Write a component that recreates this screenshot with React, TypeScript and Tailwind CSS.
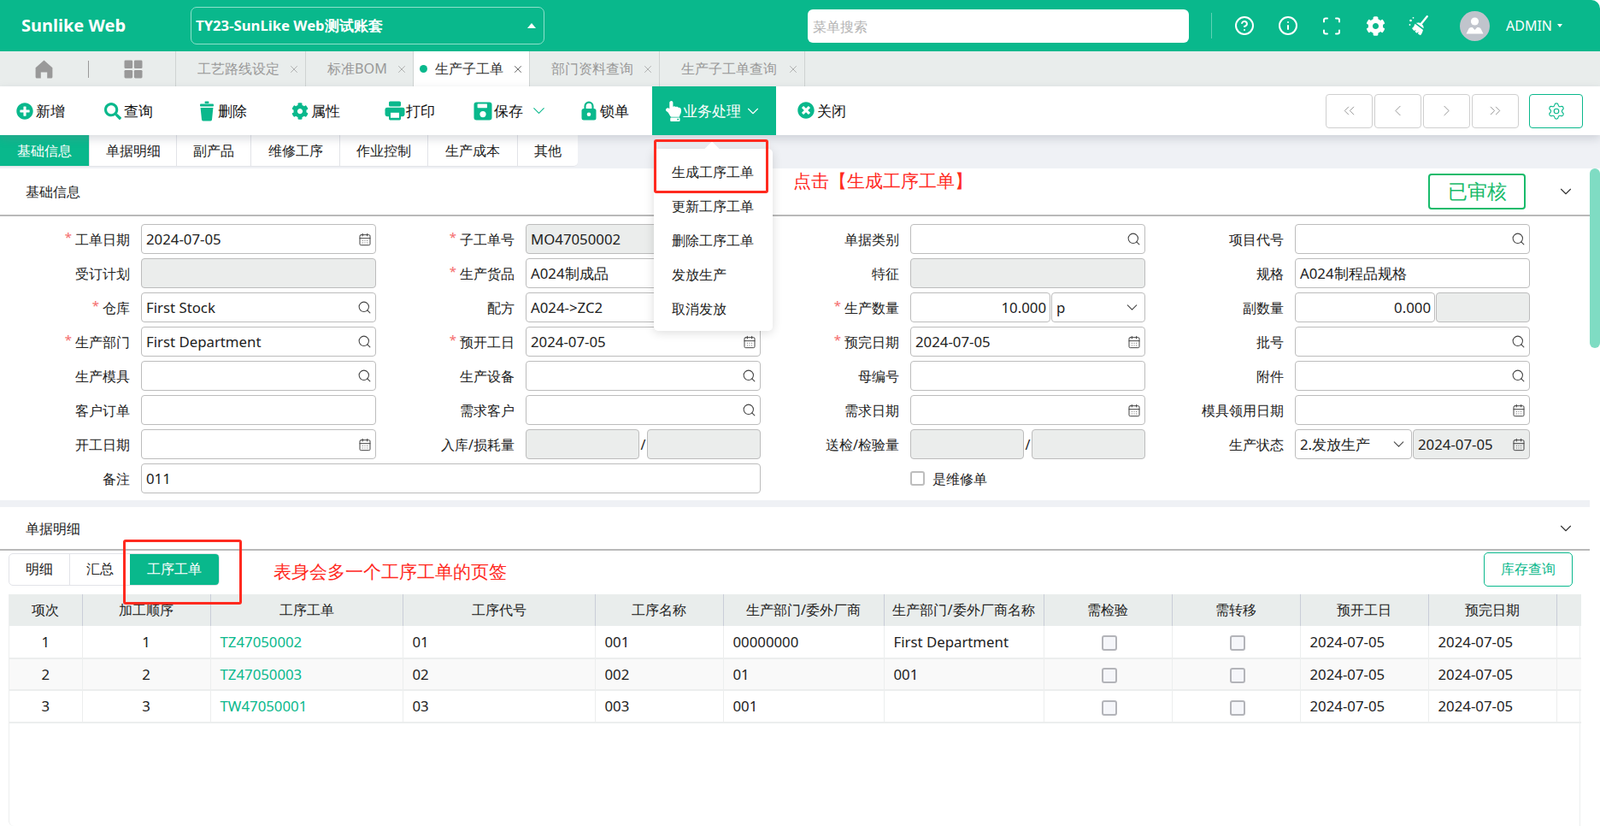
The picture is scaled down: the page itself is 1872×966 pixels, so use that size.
import React from "react";
import { FaPlusCircle, FaSearch, FaCog, FaHandPointUp, FaTimesCircle } from "react-icons/fa";
import {
  CircleHelp,
  Info,
  Scan,
  Search,
  CalendarDays,
  ChevronDown,
  ChevronsLeft,
  ChevronLeft,
  ChevronRight,
  ChevronsRight,
  Settings,
  X,
} from "lucide-react";

const GREEN = "text-[#09b88c]";

function TrashIcon() {
  return (
    <svg width="18" height="24" viewBox="0 0 18 24" fill="#09b88c">
      <rect x="6.5" y="0.5" width="5" height="2.4" rx="1" />
      <rect x="1" y="3.6" width="16" height="3" rx="1" />
      <path d="M1.6 8h14.8l-1.4 14a2 2 0 0 1-2 1.6H5a2 2 0 0 1-2-1.6z" />
    </svg>
  );
}

function PrintIcon() {
  return (
    <svg width="24" height="23" viewBox="0 0 24 23" fill="#09b88c">
      <rect x="5" y="0.5" width="14" height="6" rx="1.6" />
      <rect x="0.5" y="7.8" width="23" height="10.4" rx="2.4" />
      <rect x="5" y="12" width="14" height="10.5" rx="1.4" />
      <rect x="7" y="13.8" width="10" height="6" fill="#fff" />
    </svg>
  );
}

function SaveIcon() {
  return (
    <svg width="22" height="22" viewBox="0 0 22 22" fill="#09b88c">
      <rect x="0.5" y="0.5" width="21" height="21" rx="3" />
      <rect x="4.6" y="2.6" width="11.4" height="4.6" rx="0.6" fill="#fff" />
      <circle cx="11" cy="14.6" r="3.6" fill="#fff" />
    </svg>
  );
}

function LockIcon() {
  return (
    <svg width="18" height="23" viewBox="0 0 18 23">
      <path d="M4.5 10V6.2a4.5 4.5 0 0 1 9 0V10" fill="none" stroke="#09b88c" strokeWidth="2.2" />
      <rect x="0.5" y="9" width="17" height="13.5" rx="2.5" fill="#09b88c" />
      <circle cx="9" cy="15.7" r="2.3" fill="#fff" />
    </svg>
  );
}

function HomeIcon() {
  return (
    <svg width="21" height="22" viewBox="0 0 21 22" fill="#999">
      <path d="M10.5 0.5 20.4 9.3V20a1.6 1.6 0 0 1-1.6 1.6h-4.6v-7.2H6.8v7.2H2.2A1.6 1.6 0 0 1 .6 20V9.3z" />
    </svg>
  );
}

function GridIcon() {
  return (
    <svg width="22" height="22" viewBox="0 0 22 22" fill="#999">
      <rect x="0.5" y="0.5" width="9.6" height="9.6" rx="1.4" />
      <rect x="11.9" y="0.5" width="9.6" height="9.6" rx="1.4" />
      <rect x="0.5" y="11.9" width="9.6" height="9.6" rx="1.4" />
      <rect x="11.9" y="11.9" width="9.6" height="9.6" rx="1.4" />
    </svg>
  );
}

function AvatarIcon() {
  return (
    <svg width="35" height="35" viewBox="0 0 35 35">
      <circle cx="17.5" cy="17.5" r="17.5" fill="#c0c4cc" />
      <circle cx="17.5" cy="12" r="4.6" fill="#fff" />
      <path d="M7.5 26.5 10.5 20.5a3 3 0 0 1 2.6-1.6h1.6L17.5 22l2.8-3.1h1.6a3 3 0 0 1 2.6 1.6l3 6z" fill="#fff" />
    </svg>
  );
}

function BroomIcon() {
  return (
    <svg width="24" height="24" viewBox="0 0 24 24" fill="#fff">
      <path d="M23 1.5 15 11.5l-2-1.6L21 .3a1.3 1.3 0 0 1 2 1.2z" />
      <path d="M10.2 8.8c2-.6 3.6 0 5.3 1.4 1.7 1.4 2.4 3 2 5L8.7 8.8z" />
      <path d="M7.5 9.8 17 17c-.6 2.5-1.6 4.6-3 6.2-1-.3-2-.9-3-1.6l.7-2.4-2.3 1.5c-.7-.5-1.3-1-1.9-1.6l1.3-2-2.4 1C5.4 16.9 4.7 16.1 4 15c1.5-.4 2.7-2.6 3.500-5.200z" />
      <circle cx="2.5" cy="6" r="1.3" />
      <circle cx="5.5" cy="2.8" r="0.9" />
      <circle cx="1.5" cy="11" r="0.9" />
    </svg>
  );
}

function ToolItem({ icon, label, w, chevron }: { icon: React.ReactNode; label: string; w: string; chevron?: boolean }) {
  return (
    <div className={`flex items-center h-full ${w}`}>
      <span className="w-[26px] flex items-center justify-center">{icon}</span>
      <span className="text-[17.2px] text-[#111]">{label}</span>
      {chevron && <ChevronDown size={23} strokeWidth={1.1} className="ml-[7px] text-[#09b88c]" />}
    </div>
  );
}

function PageTab({ label, w, active, pl }: { label: string; w: string; active?: boolean; pl: string }) {
  return (
    <div
      className={`${w} ${pl} h-full flex items-center border-r border-[#cfd3d2] text-[16.2px] ${
        active ? "bg-white text-[#333]" : "text-[#999]"
      }`}
    >
      {active && <span className="w-[9px] h-[9px] rounded-full bg-[#09b88c] mr-[9px] shrink-0" />}
      <span className="whitespace-nowrap">{label}</span>
      <X size={14} strokeWidth={1.25} className={`ml-auto mr-[6px] ${active ? "text-[#333]" : "text-[#999]"}`} />
    </div>
  );
}

function SubTab({ label, w, active }: { label: string; w: string; active?: boolean }) {
  return (
    <div
      className={`${w} h-full flex items-center justify-center text-[16.2px] border-r border-[#e2e3e8] last:border-r-0 ${
        active ? "bg-[#09b88c] text-white" : "text-[#222]"
      }`}
    >
      {label}
    </div>
  );
}

function Box({
  text,
  disabled,
  icon,
  right,
  className = "flex-1",
}: {
  text?: string;
  disabled?: boolean;
  icon?: "search" | "date" | "down";
  right?: boolean;
  className?: string;
}) {
  return (
    <div
      className={`${className} h-[35px] min-w-0 rounded-[4px] border border-[#bcbcbc] pl-[5px] pr-[4px] flex items-center text-[16.8px] text-[#222] whitespace-nowrap ${
        disabled ? "bg-[#ebedec]" : "bg-white"
      }`}
    >
      <span className={right ? "ml-auto" : ""}>{text}</span>
      {icon === "search" && <Search size={17} strokeWidth={1.5} className="ml-auto text-[#444]" />}
      {icon === "date" && <CalendarDays size={16} strokeWidth={1.5} className="ml-auto text-[#444]" />}
      {icon === "down" && <ChevronDown size={21} strokeWidth={1.2} className="ml-auto text-[#444]" />}
    </div>
  );
}

function Field({ label, req, children }: { label: string; req?: boolean; children: React.ReactNode }) {
  return (
    <div className="flex items-center h-[35px]">
      <div className="w-[152px] flex justify-end items-center text-[16px] text-[#222] whitespace-nowrap">
        {req && <span className="text-[#f56c6c] text-[15px] mr-[4px] leading-none mb-[5px]">*</span>}
        {label}
      </div>
      <div className="ml-[13px] w-[275px] flex items-center">{children}</div>
    </div>
  );
}

function SectionHead({ title, className, children }: { title: string; className: string; children?: React.ReactNode }) {
  return (
    <div className={`${className} flex items-center pl-[30px] pr-[17px] text-[16px] text-[#222] border-b-2 border-[#b9b9b9]`}>
      <span>{title}</span>
      <div className="ml-auto flex items-center">
        {children}
        <ChevronDown size={22} strokeWidth={1.2} className="ml-[36px] text-[#333]" />
      </div>
    </div>
  );
}

const headers = [
  "项次",
  "加工顺序",
  "工序工单",
  "工序代号",
  "工序名称",
  "生产部门/委外厂商",
  "生产部门/委外厂商名称",
  "需检验",
  "需转移",
  "预开工日",
  "预完日期",
  "",
];
const colW = ["w-[85px]", "w-[150px]", "w-[225px]", "w-[225px]", "w-[150px]", "w-[188px]", "w-[187px]", "w-[150px]", "w-[150px]", "w-[150px]", "w-[150px]", "w-[29px]"];

const rows = [
  ["1", "1", "TZ47050002", "01", "001", "00000000", "First Department"],
  ["2", "2", "TZ47050003", "02", "002", "01", "001"],
  ["3", "3", "TW47050001", "03", "003", "001", ""],
];

function Check() {
  return <span className="inline-block ml-[4px] align-middle w-[18px] h-[18px] rounded-[3px] border-2 border-[#b3b4b9] bg-[#f5f6fa]" />;
}

export default function App() {
  return (
    <div className="relative w-[1872px] h-[966px] overflow-hidden bg-white font-['Noto_Sans_CJK_SC','Noto_Sans',sans-serif]">
      {/* Top header */}
      <header className="h-[60px] bg-[#09b88c] rounded-tr-[10px] flex items-center text-white">
        <div className="w-[223px] pl-[25px] text-[20px] font-bold font-['Roboto','Noto_Sans_CJK_SC',sans-serif]">Sunlike Web</div>
        <div className="w-[414px] h-[44px] rounded-[7px] border border-[#8fe0cb] flex items-center pl-[5px] pr-[9px]">
          <span className="text-[16.7px] font-bold">TY23-SunLike Web测试账套</span>
          <span className="ml-auto w-0 h-0 border-x-[5px] border-x-transparent border-b-[6px] border-b-white" />
        </div>
        <div className="ml-[308px] w-[446px] h-[39px] rounded-[6px] bg-white flex items-center pl-[6px] pt-[2px] text-[16px] text-[#b4b4b4]">
          菜单搜索
        </div>
        <div className="ml-[26px] w-px h-[30px] bg-[#5fd2b5]" />
        <div className="ml-[26px] w-[24px] flex justify-center"><CircleHelp size={24} strokeWidth={2} /></div>
        <div className="ml-[27px] w-[24px] flex justify-center"><Info size={24} strokeWidth={2} /></div>
        <div className="ml-[27px] w-[24px] flex justify-center"><Scan size={27} strokeWidth={2} /></div>
        <div className="ml-[27px] w-[24px] flex justify-center"><FaCog size={23} /></div>
        <div className="ml-[27px] w-[24px] flex justify-center"><BroomIcon /></div>
        <div className="ml-[36px]"><AvatarIcon /></div>
        <span className="ml-[19px] text-[16px]">ADMIN</span>
        <span className="ml-[6px] w-0 h-0 border-x-[3.5px] border-x-transparent border-t-[4px] border-t-white" />
      </header>

      {/* Page tabs */}
      <nav className="h-[41px] bg-[#e9edec] flex items-center">
        <div className="w-[206px] h-full flex items-center border-r border-[#cfd3d2]">
          <div className="ml-[41px]"><HomeIcon /></div>
          <div className="ml-[41px] w-px h-[20px] bg-[#999]" />
          <div className="ml-[41px]"><GridIcon /></div>
        </div>
        <PageTab label="工艺路线设定" w="w-[152px]" pl="pl-[25px]" />
        <PageTab label="标准BOM" w="w-[126px]" pl="pl-[25px]" />
        <PageTab label="生产子工单" w="w-[136px]" pl="pl-[7px]" active />
        <PageTab label="部门资料查询" w="w-[152px]" pl="pl-[25px]" />
        <PageTab label="生产子工单查询" w="w-[170px]" pl="pl-[25px]" />
      </nav>

      {/* Toolbar */}
      <div className="relative z-10 h-[57px] bg-white flex items-center pl-[16px] shadow-[0_4px_10px_rgba(120,125,140,0.28)]">
        <ToolItem w="w-[103px]" label="新增" icon={<FaPlusCircle size={20} className={GREEN} />} />
        <ToolItem w="w-[110px]" label="查询" icon={<FaSearch size={20} className={GREEN} />} />
        <ToolItem w="w-[109px]" label="删除" icon={<TrashIcon />} />
        <ToolItem w="w-[111px]" label="属性" icon={<FaCog size={20} className={GREEN} />} />
        <ToolItem w="w-[103px]" label="打印" icon={<PrintIcon />} />
        <ToolItem w="w-[124px]" label="保存" chevron icon={<SaveIcon />} />
        <ToolItem w="w-[87px]" label="锁单" icon={<LockIcon />} />
        <div className="w-[145px] h-full bg-[#09b88c] text-white flex items-center pl-[13px]">
          <FaHandPointUp size={24} />
          <span className="ml-[-1px] text-[17.2px]">业务处理</span>
          <ChevronDown size={22} strokeWidth={1.2} className="ml-[3px]" />
        </div>
        <div className="ml-[22px]">
          <ToolItem w="w-[80px]" label="关闭" icon={<FaTimesCircle size={20} className={GREEN} />} />
        </div>
        <div className="ml-auto mr-[20px] flex items-center">
          {[ChevronsLeft, ChevronLeft, ChevronRight, ChevronsRight].map((I, i) => (
            <div key={i} className="w-[55px] h-[40px] mr-[2px] rounded-[4px] border border-[#cfcfcf] flex items-center justify-center text-[#888]">
              <I size={21} strokeWidth={1} />
            </div>
          ))}
          <div className="ml-[10px] w-[63px] h-[40px] rounded-[4px] border border-[#09b88c] flex items-center justify-center text-[#09b88c]">
            <Settings size={22} strokeWidth={1.25} />
          </div>
        </div>
      </div>

      {/* Sub tabs */}
      <div className="h-[39px] bg-[#eff1f5]">
        <div className="w-[676px] h-[37px] flex bg-white rounded-br-[5px] overflow-hidden border-b border-[#e2e3e8]">
          <SubTab label="基础信息" w="w-[105px]" active />
          <SubTab label="单据明细" w="w-[102px]" />
          <SubTab label="副产品" w="w-[87px]" />
          <SubTab label="维修工序" w="w-[104px]" />
          <SubTab label="作业控制" w="w-[103px]" />
          <SubTab label="生产成本" w="w-[105px]" />
          <SubTab label="其他" w="w-[70px]" />
        </div>
      </div>

      {/* Scrollable body */}
      <div className="flex h-[769px]">
        <div className="w-[1860px] bg-[#eff1f5] flex flex-col gap-[8px]">
          {/* Basic info */}
          <section className="h-[388px] bg-white">
            <SectionHead title="基础信息" className="h-[56px]">
              <div className="w-[114px] h-[42px] rounded-[4px] border-2 border-[#18bb6b] flex items-center justify-center text-[22.5px] text-[#18bb6b]">
                已审核
              </div>
            </SectionHead>
            <div className="pt-[9px] grid grid-cols-[repeat(4,450px)] gap-y-[5px]">
              <Field label="工单日期" req><Box text="2024-07-05" icon="date" /></Field>
              <Field label="子工单号" req><Box text="MO47050002" disabled /></Field>
              <Field label="单据类别"><Box icon="search" /></Field>
              <Field label="项目代号"><Box icon="search" /></Field>

              <Field label="受订计划"><Box disabled /></Field>
              <Field label="生产货品" req><Box text="A024制成品" /></Field>
              <Field label="特征"><Box disabled /></Field>
              <Field label="规格"><Box text="A024制程品规格" /></Field>

              <Field label="仓库" req><Box text="First Stock" icon="search" /></Field>
              <Field label="配方"><Box text="A024->ZC2" /></Field>
              <Field label="生产数量" req>
                <Box text="10.000" right className="w-[164px]" />
                <Box text="p" icon="down" className="ml-px w-[110px]" />
              </Field>
              <Field label="副数量">
                <Box text="0.000" right className="w-[164px]" />
                <Box disabled className="ml-px w-[110px]" />
              </Field>

              <Field label="生产部门" req><Box text="First Department" icon="search" /></Field>
              <Field label="预开工日" req><Box text="2024-07-05" icon="date" /></Field>
              <Field label="预完日期" req><Box text="2024-07-05" icon="date" /></Field>
              <Field label="批号"><Box icon="search" /></Field>

              <Field label="生产模具"><Box icon="search" /></Field>
              <Field label="生产设备"><Box icon="search" /></Field>
              <Field label="母编号"><Box /></Field>
              <Field label="附件"><Box icon="search" /></Field>

              <Field label="客户订单"><Box /></Field>
              <Field label="需求客户"><Box icon="search" /></Field>
              <Field label="需求日期"><Box icon="date" /></Field>
              <Field label="模具领用日期"><Box icon="date" /></Field>

              <Field label="开工日期"><Box icon="date" /></Field>
              <Field label="入库/损耗量">
                <Box disabled className="w-[133px]" />
                <span className="w-[9px] text-center text-[16px] text-[#222]">/</span>
                <Box disabled className="w-[133px]" />
              </Field>
              <Field label="送检/检验量">
                <Box disabled className="w-[133px]" />
                <span className="w-[9px] text-center text-[16px] text-[#222]">/</span>
                <Box disabled className="w-[133px]" />
              </Field>
              <Field label="生产状态">
                <Box text="2.发放生产" icon="down" className="w-[137px]" />
                <Box text="2024-07-05" icon="date" disabled className="ml-px w-[137px]" />
              </Field>

              <div className="col-span-2 flex items-center h-[35px]">
                <div className="w-[152px] text-right text-[16px] text-[#222]">备注</div>
                <div className="ml-[13px] w-[725px] flex"><Box text="011" /></div>
              </div>
              <div className="flex items-center h-[35px] pl-[165px]">
                <span className="w-[17px] h-[17px] rounded-[3px] border-2 border-[#bdbdbd] bg-white" />
                <span className="ml-[9px] text-[16px] text-[#222]">是维修单</span>
              </div>
            </div>
          </section>

          {/* Detail */}
          <section className="flex-1 bg-white flex flex-col min-h-0">
            <SectionHead title="单据明细" className="h-[51px]" />
            <div className="flex items-center h-[51px] pl-[10px] pr-[20px]">
              <div className="h-[38px] w-[247px] flex rounded-[5px] border border-[#e2e3e8] overflow-hidden mt-[-8px] text-[16.3px]">
                <div className="w-[71px] flex items-center justify-center border-r border-[#e2e3e8] text-[#222]">明细</div>
                <div className="w-[70px] flex items-center justify-center text-[#222]">汇总</div>
                <div className="flex-1 bg-[#09b88c] text-white flex items-center justify-center">工序工单</div>
              </div>
              <div className="ml-auto w-[104px] h-[40px] mt-[-8px] rounded-[5px] border border-[#09b88c] flex items-center justify-center text-[16.3px] text-[#09b88c]">
                库存查询
              </div>
            </div>
            <div className="ml-[10px] w-[1839px] flex-1 border-x border-[#eceeee] rounded-bl-[6px] min-h-0">
              <table className="table-fixed border-collapse w-full text-[16.8px] text-[#222]">
                <colgroup>
                  {colW.map((c, i) => (
                    <col key={i} className={c} />
                  ))}
                </colgroup>
                <thead>
                  <tr className="h-[37px] bg-[#e9edec]">
                    {headers.map((h, i) => (
                      <th key={i} className="font-normal text-[16.2px] text-center whitespace-nowrap border-r border-[#c9cdd8] last:border-r-0 px-0">
                        {h}
                      </th>
                    ))}
                  </tr>
                </thead>
                <tbody>
                  {rows.map((r, ri) => (
                    <tr key={ri} className={`h-[37.5px] border-b-2 border-[#eceeee] ${ri === 1 ? "bg-[#f9f9f9]" : ""}`}>
                      <td className="text-center border-r border-[#eceeee]">{r[0]}</td>
                      <td className="text-center border-r border-[#eceeee]">{r[1]}</td>
                      <td className="pl-[11px] border-r border-[#eceeee] text-[#09b88c]">{r[2]}</td>
                      <td className="pl-[11px] border-r border-[#eceeee]">{r[3]}</td>
                      <td className="pl-[11px] border-r border-[#eceeee]">{r[4]}</td>
                      <td className="pl-[11px] border-r border-[#eceeee]">{r[5]}</td>
                      <td className="pl-[11px] border-r border-[#eceeee]">{r[6]}</td>
                      <td className="text-center border-r border-[#eceeee]"><Check /></td>
                      <td className="text-center border-r border-[#eceeee]"><Check /></td>
                      <td className="pl-[11px] border-r border-[#eceeee]">2024-07-05</td>
                      <td className="pl-[11px] border-r border-[#eceeee]">2024-07-05</td>
                      <td />
                    </tr>
                  ))}
                </tbody>
              </table>
            </div>
          </section>
        </div>
        <div className="w-[12px] bg-white">
          <div className="h-[210px] rounded-[6px] bg-[#7fdcc3]" />
        </div>
      </div>

      {/* Dropdown menu over content */}
      <div className="absolute z-20 left-[765px] top-[174px] w-[139px] h-[213px] bg-white rounded-[5px] shadow-[0_2px_12px_rgba(0,0,0,0.14)] pt-[7px] pl-[21px] text-[16.2px] text-[#222]">
        <span className="absolute left-[62px] top-[-6px] w-[12px] h-[12px] rotate-45 bg-white" />
        {["生成工序工单", "更新工序工单", "删除工序工单", "发放生产", "取消发放"].map((t) => (
          <div key={t} className="h-[40px] flex items-center">{t}</div>
        ))}
      </div>

      {/* Annotations */}
      <div className="absolute z-30 left-[765px] top-[163px] w-[134px] h-[63px] border-[3px] border-[#ff2a1f] rounded-[3px]" />
      <div className="absolute z-30 left-[144px] top-[631px] w-[139px] h-[76px] border-[3px] border-[#ff2a1f] rounded-[3px]" />
      <div className="absolute z-30 left-[928px] top-[196px] text-[21.2px] leading-[30px] text-[#ff2a1f] whitespace-nowrap">点击【生成工序工单】</div>
      <div className="absolute z-30 left-[320px] top-[653px] text-[21px] leading-[30px] text-[#ff2a1f] whitespace-nowrap">表身会多一个工序工单的页签</div>
    </div>
  );
}
